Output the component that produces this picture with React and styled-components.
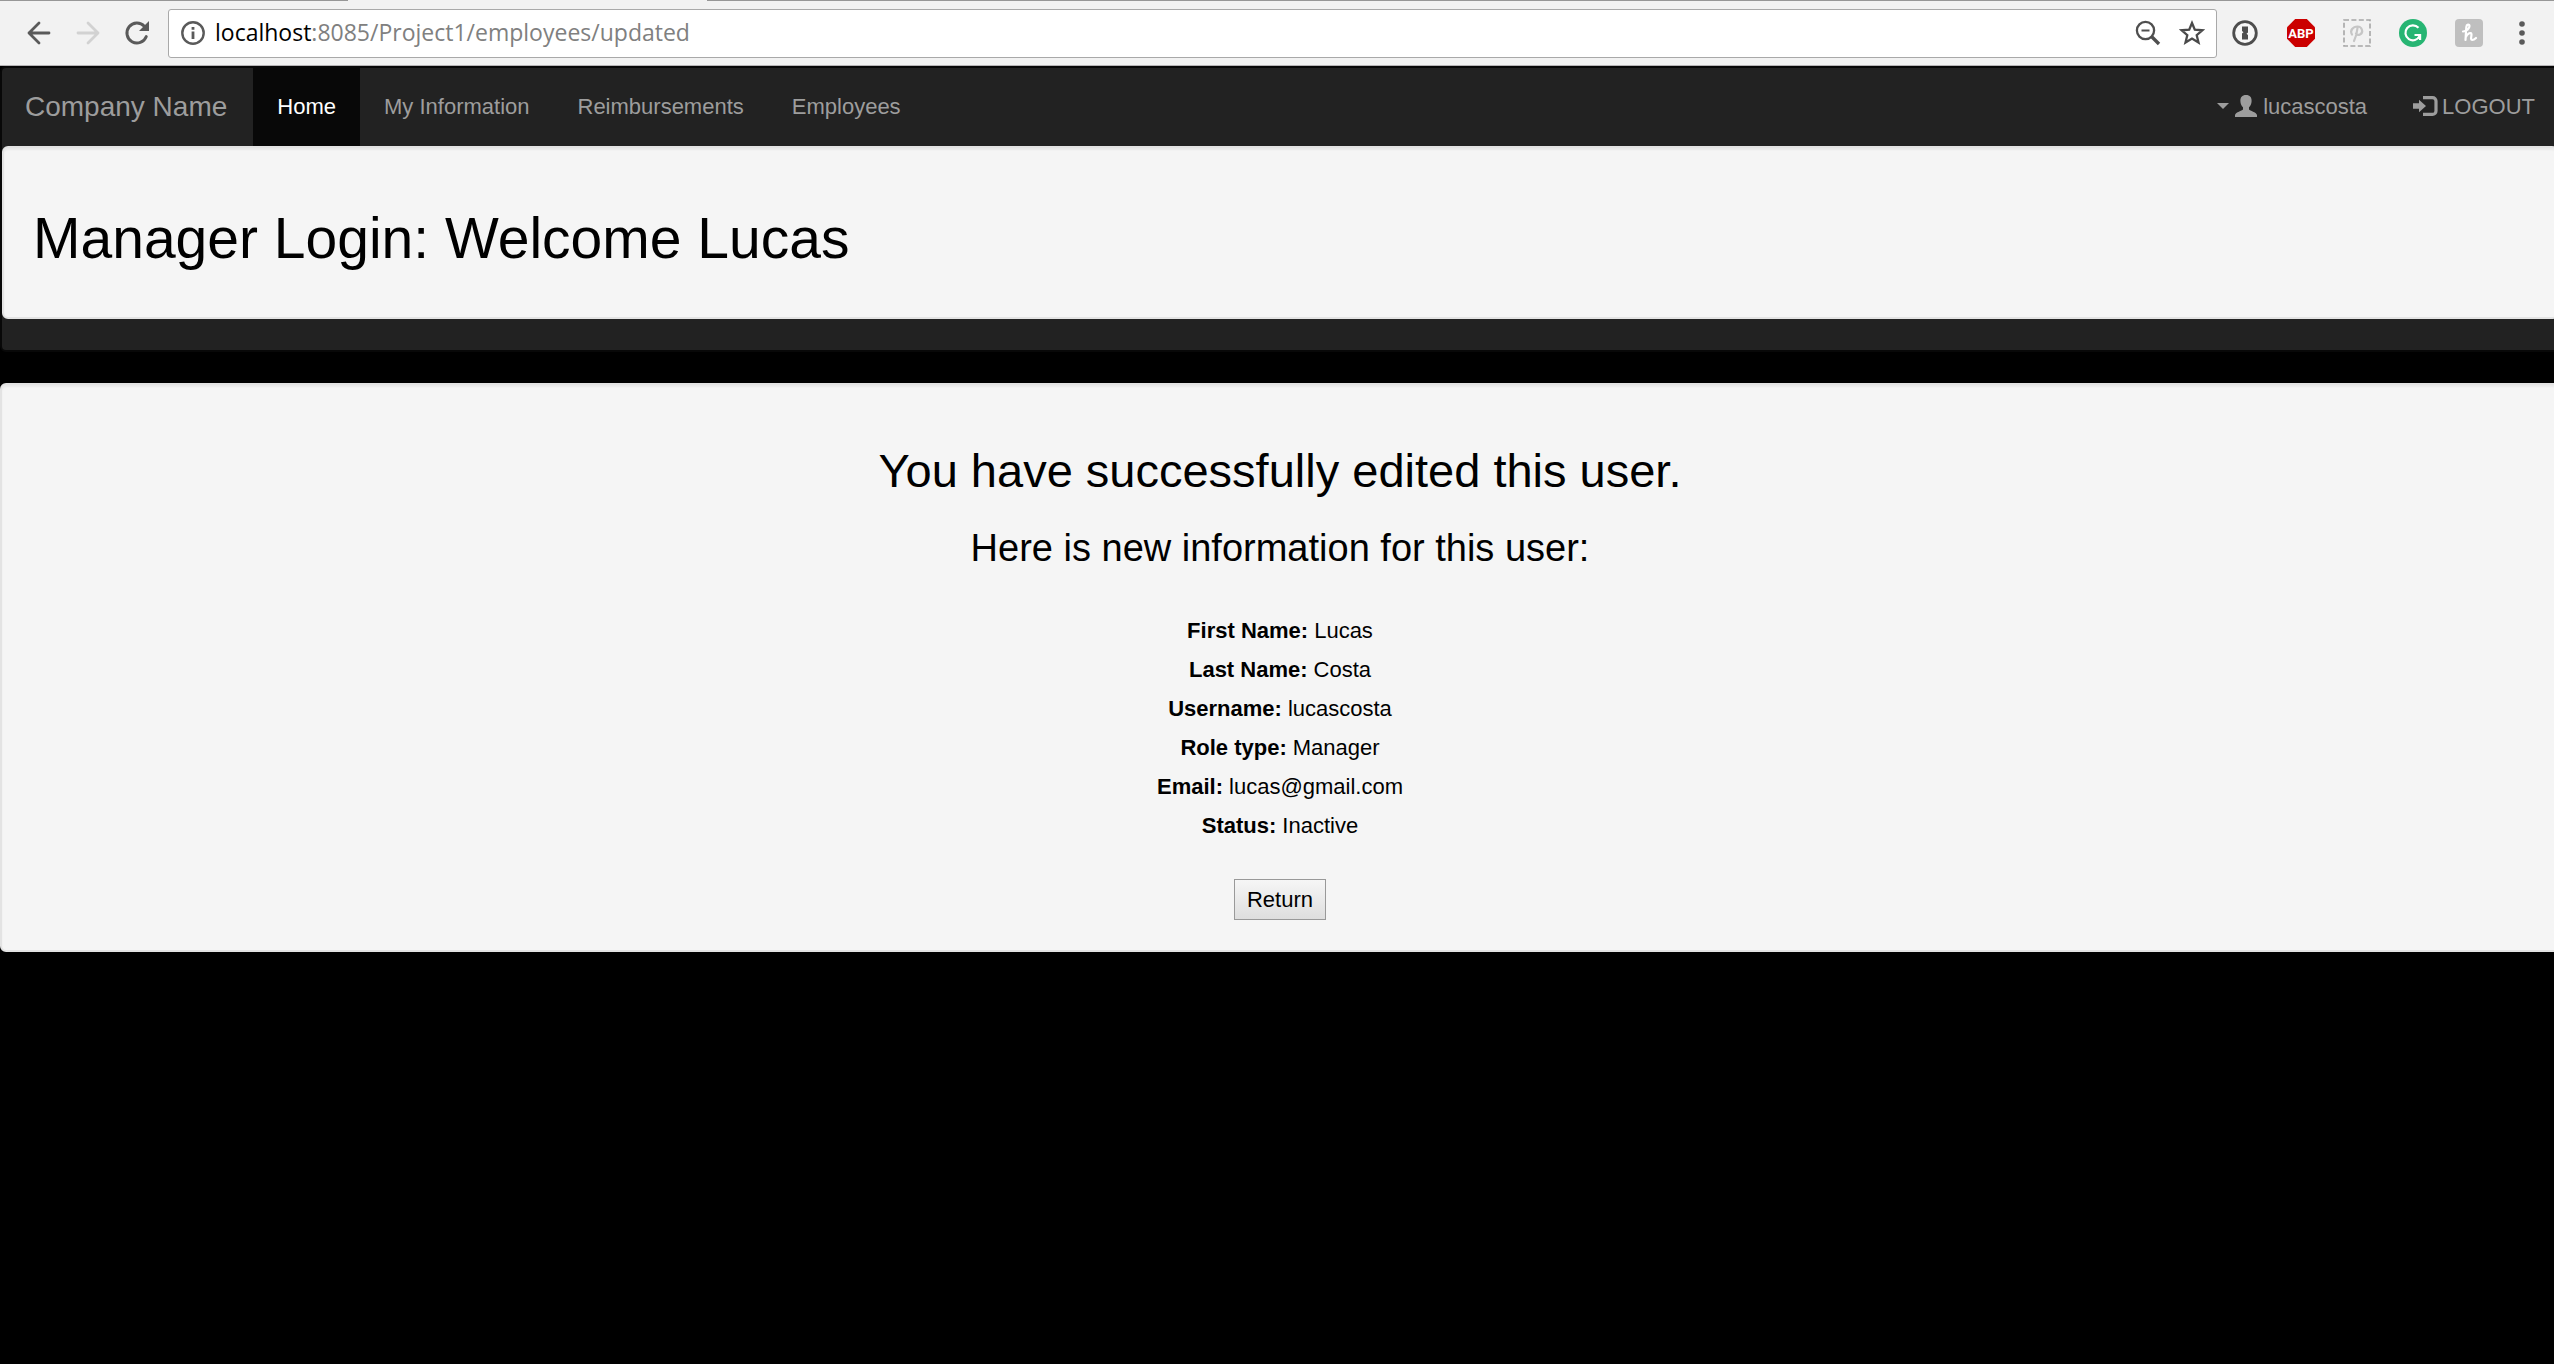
import React from "react";
import styled, { createGlobalStyle } from "styled-components";

const sans = `"Liberation Sans", Arial, Helvetica, sans-serif`;

const GlobalStyle = createGlobalStyle`
  *, *::before, *::after { box-sizing: border-box; }
  html, body { margin: 0; background: #000; }
  body { font: 22px/31px ${sans}; color: #000; }
`;

const Shell = styled.div`
  display: flex;
  flex-direction: column;
  overflow: hidden;
  min-height: 100vh;
`;

/* browser toolbar */

const TabEdge = styled.div`
  display: grid;
  grid-template-columns: 348px 359px 1fr;
  height: 1px;
  background: #f2f2f2;
`;

const TabLine = styled.span`
  grid-column: ${(p) => p.$col};
  background: #979797;
`;

const Toolbar = styled.header`
  display: flex;
  align-items: center;
  height: 65px;
  padding: 0 15px 0 20px;
  background: #f2f2f2;
  border-bottom: 1px solid #b6b4b6;
`;

const ToolButton = styled.button`
  display: flex;
  align-items: center;
  justify-content: center;
  width: ${(p) => p.$w}px;
  height: 40px;
  margin: 0;
  padding: 0;
  border: 0;
  background: none;
  flex: none;
`;

const NavButtons = styled.div`
  display: flex;
  gap: 11px;
  margin-right: 12px;
`;

const AddressBar = styled.div`
  display: flex;
  align-items: center;
  flex: 1;
  height: 49px;
  padding: 0 2px 0 12px;
  border: 1px solid #a9a9a9;
  border-radius: 3px;
  background: #fff;
`;

const Url = styled.div`
  flex: 1;
  margin-left: 10px;
  padding-bottom: 2px;
  font: 23px/32px "Open Sans", "Noto Sans", sans-serif;
  color: #808080;
`;

const Host = styled.span`
  color: #000;
`;

const Extensions = styled.div`
  display: flex;
  gap: 16px;
  margin-left: 8px;
`;

/* page */

const Page = styled.div`
  width: calc(100% + 6px);
`;

const Navbar = styled.nav`
  margin-bottom: 31px;
  border: 2px solid #080808;
  border-radius: 6px;
  background: #222;
`;

const NavRow = styled.div`
  display: flex;
  height: 78px;
`;

const NavLink = styled.a`
  display: flex;
  align-items: center;
  gap: ${(p) => p.$gap || 0}px;
  padding: 0 ${(p) => (p.$gap ? 23 : 24)}px 2px;
  font-size: 22px;
  color: ${(p) => (p.$active ? "#fff" : "#9d9d9d")};
  background: ${(p) => (p.$active ? "#080808" : "transparent")};
  text-decoration: none;
`;

const Brand = styled(NavLink)`
  padding: 0 26px 2px 23px;
  font-size: 28px;
`;

const NavList = styled.ul`
  display: flex;
  margin: 0;
  margin-left: ${(p) => (p.$right ? "auto" : 0)};
  padding: 0;
  list-style: none;
`;

const NavItem = styled.li`
  display: flex;
`;

const Caret = styled.span`
  border: 6px solid transparent;
  border-top-color: currentColor;
  border-bottom: 0;
`;

const Well = styled.section`
  margin-bottom: 31px;
  padding: 29px 29px 30px;
  border: 2px solid #e3e3e3;
  border-radius: 6px;
  background: #f5f5f5;
  box-shadow: inset 0 2px 2px rgba(0, 0, 0, 0.05);
  text-align: ${(p) => (p.$center ? "center" : "left")};
`;

const Title = styled.h1`
  margin: 30px 0 18px;
  font-size: 57px;
  line-height: 62px;
  font-weight: 400;
`;

const Heading = styled.h2`
  margin: 31px 0;
  font-size: 47px;
  line-height: 52px;
  font-weight: 400;
`;

const SubHeading = styled.h3`
  margin: 0 0 46px;
  font-size: 38px;
  line-height: 41px;
  font-weight: 400;
`;

const Details = styled.dl`
  display: flex;
  flex-direction: column;
  gap: 8px;
  margin: 0 0 38px;
`;

const Detail = styled.div`
  display: flex;
  justify-content: center;
  gap: 6px;
`;

const Term = styled.dt`
  font-weight: 700;
`;

const Value = styled.dd`
  margin: 0;
`;

const ReturnButton = styled.button`
  display: block;
  height: 41px;
  margin: 0 auto;
  padding: 0 12px;
  border: 1px solid #999;
  border-radius: 0;
  background: linear-gradient(#f6f6f6, #dedede);
  font: 22px/31px ${sans};
  color: #000;
`;

const details = [
  ["First Name:", "Lucas"],
  ["Last Name:", "Costa"],
  ["Username:", "lucascosta"],
  ["Role type:", "Manager"],
  ["Email:", "lucas@gmail.com"],
  ["Status:", "Inactive"],
];

const links = ["Home", "My Information", "Reimbursements", "Employees"];

const BackIcon = ({ color, flip }) => (
  <svg width="24" height="24" viewBox="0 0 24 24" fill="none" stroke={color} strokeWidth="2.8" strokeLinecap="round" strokeLinejoin="round">
    <path d={flip ? "M2 12h20M12 2l10 10-10 10" : "M22 12H2M12 2 2 12l10 10"} />
  </svg>
);

const ReloadIcon = () => (
  <svg width="26" height="26" viewBox="0 0 26 26" fill="none">
    <path d="M20.300 6.200A10 10 0 1 0 22.300 16.500" stroke="#5a5a5a" strokeWidth="2.9" strokeLinecap="round" />
    <path d="M25 1v10H15z" fill="#5a5a5a" />
  </svg>
);

const InfoIcon = () => (
  <svg width="24" height="24" viewBox="0 0 24 24" fill="none" stroke="#5a5a5a">
    <circle cx="12" cy="12" r="10.7" strokeWidth="2.4" />
    <path d="M12 10.5v7.5M12 6v2.8" strokeWidth="2.8" />
  </svg>
);

const ZoomOutIcon = () => (
  <svg width="26" height="26" viewBox="0 0 26 26" fill="none" stroke="#4f4f4f">
    <circle cx="10.5" cy="10.5" r="8.6" strokeWidth="2.3" />
    <path d="M6.500 10.5h8" strokeWidth="2" />
    <path d="m16.5 16.5 7.5 7.5" strokeWidth="3.4" />
  </svg>
);

const StarIcon = () => (
  <svg width="26" height="26" viewBox="0 0 26 26" fill="none" stroke="#4a4a4a" strokeWidth="2.3">
    <path d="m13 3 2.800 6.700 7.600.600-5.700 4.900 1.800 7.300-6.500-4-6.500 4 1.800-7.300-5.700-4.900 7.600-.600z" />
  </svg>
);

const KeyholeIcon = () => (
  <svg width="26" height="26" viewBox="0 0 26 26">
    <circle cx="13" cy="13" r="11.3" fill="#f7f7f7" stroke="#4d4d4d" strokeWidth="2.8" />
    <path d="M10 6.5h6v6l-1.5 1.2 1.5 1.2v4.6h-6v-6l1.5-1.2-1.5-1.2z" fill="#4d4d4d" />
  </svg>
);

const AbpText = styled.text`
  font: 700 13px Roboto, sans-serif;
  fill: #fff;
  text-anchor: middle;
`;

const AbpIcon = () => (
  <svg width="28" height="28" viewBox="0 0 28 28">
    <path d="M8.2 0h11.6L28 8.2v11.6L19.8 28H8.2L0 19.8V8.2z" fill="#cb0000" />
    <AbpText x="14" y="19">ABP</AbpText>
  </svg>
);

const PinIcon = () => (
  <svg width="28" height="28" viewBox="0 0 28 28" fill="none">
    <path d="M1 1h26v26H1z" stroke="#a6a6a6" strokeWidth="1.6" strokeDasharray="5 2.4" />
    <path d="M9 15.500c-2.500-4 1-8 5.500-8s6.500 6 2.500 8c-2 1-3.500 0-4-1M14.500 9c-.5 5-1.500 9-3.500 13" stroke="#c6c6c6" strokeWidth="2.2" strokeLinecap="round" />
  </svg>
);

const GIcon = () => (
  <svg width="28" height="28" viewBox="0 0 28 28" fill="none">
    <circle cx="14" cy="14" r="14" fill="#27b573" />
    <path d="M19.500 8.800A7.500 7.500 0 1 0 20.700 17M15.500 16h5.600v5" stroke="#fff" strokeWidth="2.2" />
  </svg>
);

const HoneyIcon = () => (
  <svg width="28" height="28" viewBox="0 0 28 28" fill="none">
    <rect width="28" height="28" rx="4" fill="#bfbfbf" />
    <path d="M8 12.500c3.500 0 6.500-3 6.500-5.500 0-2-3-1.800-3.200 1L10.500 21M10.800 18c1.500-3.500 5.700-5.500 5.700-2.500 0 2-1.300 5.500.7 5.500 1.500 0 2.800-1 3.800-2" stroke="#fff" strokeWidth="2.2" strokeLinecap="round" />
  </svg>
);

const MenuIcon = () => (
  <svg width="6" height="24" viewBox="0 0 6 24" fill="#5a5a5a">
    <circle cx="3" cy="3" r="2.8" />
    <circle cx="3" cy="12" r="2.8" />
    <circle cx="3" cy="21" r="2.8" />
  </svg>
);

const UserIcon = () => (
  <svg width="22" height="22" viewBox="0 0 22 22" fill="currentColor">
    <path d="M11 0c4 0 5.8 2.500 5.600 6.200 0 2.600-1.200 4.800-2.600 6v2.300c1 1.500 7.200 2.500 8 5.500V22H0v-2c.8-3 7-4 8-5.500v-2.300c-1.400-1.200-2.600-3.400-2.600-6C5.200 2.500 7 0 11 0z" />
  </svg>
);

const LogoutIcon = () => (
  <svg width="25" height="20" viewBox="0 0 25 20" fill="none">
    <path d="M10 1.600h9.500a3.500 3.500 0 0 1 3.500 3.500v9.800a3.500 3.500 0 0 1-3.500 3.500H10" stroke="currentColor" strokeWidth="3.200" />
    <path d="M0 7.200h6V3.700L13 10l-7 6.300v-3.500H0z" fill="currentColor" />
  </svg>
);

export default function App() {
  return (
    <Shell>
      <GlobalStyle />
      <TabEdge>
        <TabLine $col="1" />
        <TabLine $col="3" />
      </TabEdge>
      <Toolbar>
        <NavButtons>
          <ToolButton $w={38} aria-label="Back"><BackIcon color="#5a5a5a" /></ToolButton>
          <ToolButton $w={38} aria-label="Forward"><BackIcon color="#d2d2d2" flip /></ToolButton>
          <ToolButton $w={38} aria-label="Reload"><ReloadIcon /></ToolButton>
        </NavButtons>
        <AddressBar>
          <InfoIcon />
          <Url><Host>localhost</Host>:8085/Project1/employees/updated</Url>
          <ToolButton $w={44} aria-label="Zoom"><ZoomOutIcon /></ToolButton>
          <ToolButton $w={44} aria-label="Bookmark"><StarIcon /></ToolButton>
        </AddressBar>
        <Extensions>
          <ToolButton $w={40} aria-label="Passwords"><KeyholeIcon /></ToolButton>
          <ToolButton $w={40} aria-label="Ad blocker"><AbpIcon /></ToolButton>
          <ToolButton $w={40} aria-label="Pin"><PinIcon /></ToolButton>
          <ToolButton $w={40} aria-label="Grammar"><GIcon /></ToolButton>
          <ToolButton $w={40} aria-label="Coupons"><HoneyIcon /></ToolButton>
          <ToolButton $w={34} aria-label="Menu"><MenuIcon /></ToolButton>
        </Extensions>
      </Toolbar>
      <Page>
        <Navbar>
          <NavRow>
            <Brand href="#">Company Name</Brand>
            <NavList>
              {links.map((label, i) => (
                <NavItem key={label}>
                  <NavLink href="#" $active={i === 0}>{label}</NavLink>
                </NavItem>
              ))}
            </NavList>
            <NavList $right>
              <NavItem>
                <NavLink href="#" $gap={6}><Caret /><UserIcon />lucascosta</NavLink>
              </NavItem>
              <NavItem>
                <NavLink href="#" $gap={4}><LogoutIcon />LOGOUT</NavLink>
              </NavItem>
            </NavList>
          </NavRow>
          <Well>
            <Title>Manager Login: Welcome Lucas</Title>
          </Well>
        </Navbar>
        <Well $center>
          <Heading>You have successfully edited this user.</Heading>
          <SubHeading>Here is new information for this user:</SubHeading>
          <Details>
            {details.map(([term, value]) => (
              <Detail key={term}>
                <Term>{term}</Term>
                <Value>{value}</Value>
              </Detail>
            ))}
          </Details>
          <ReturnButton type="button">Return</ReturnButton>
        </Well>
      </Page>
    </Shell>
  );
}
